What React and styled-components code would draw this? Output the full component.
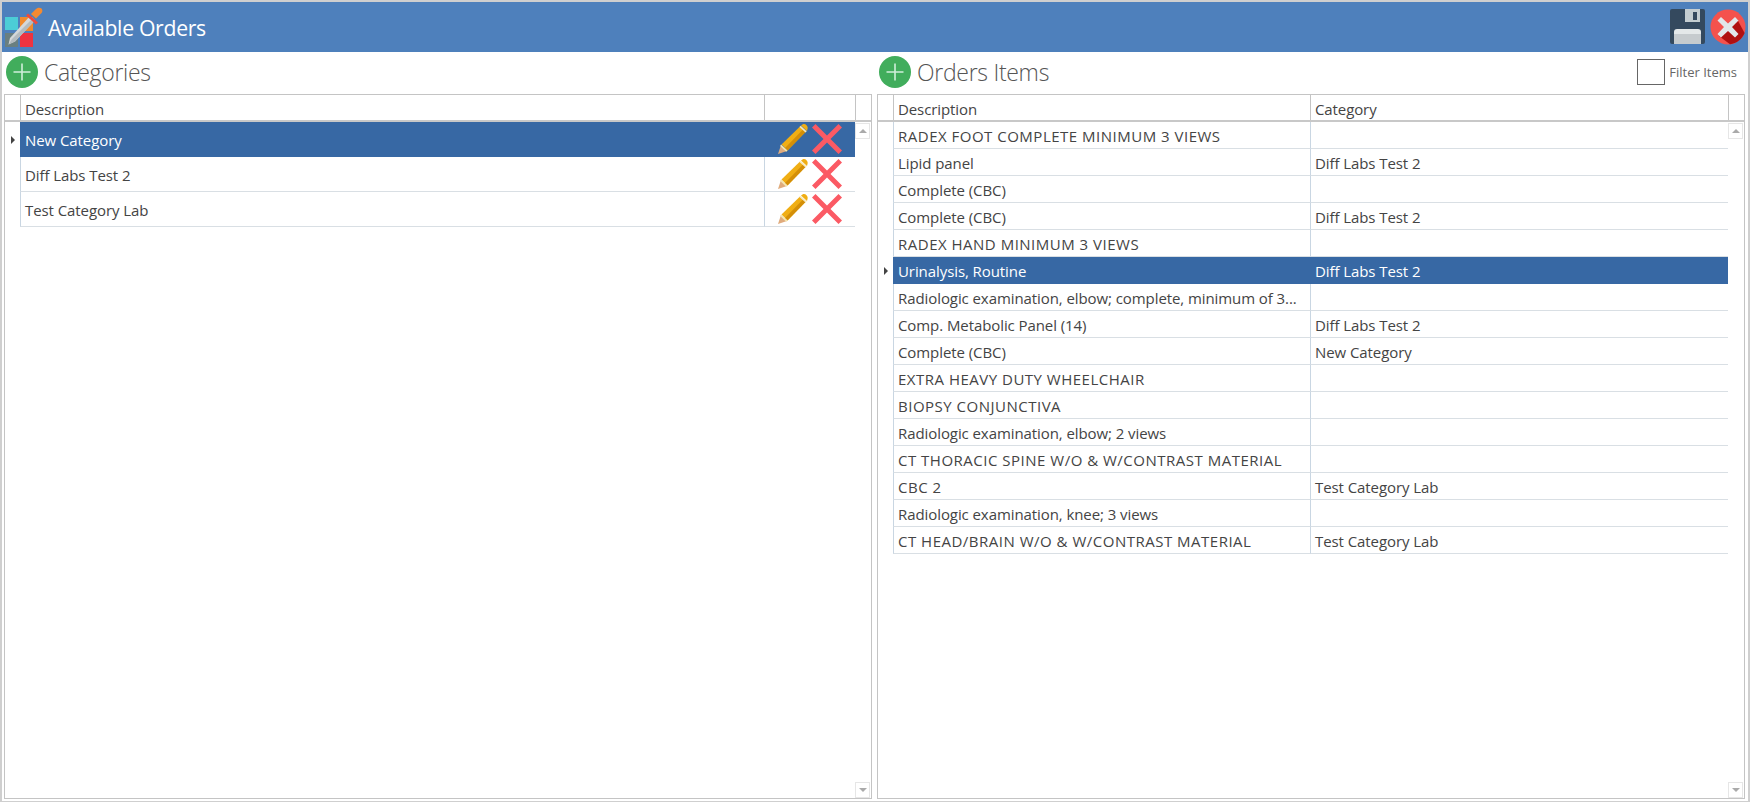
import React from "react";
import styled, { createGlobalStyle } from "styled-components";

const Global = createGlobalStyle`
  html, body { margin: 0; padding: 0; background: #fff; }
  #root { height: 802px; }
  * { box-sizing: border-box; }
`;

const Window = styled.div`
  width: 1750px; height: 802px; display: flex; flex-direction: column;
  background: #fff; border: 2px solid #cfcfcf; border-bottom-width: 1px;
  font-family: "Open Sans", "Noto Sans", sans-serif; color: #444;
`;
const TitleBar = styled.header`
  height: 50px; flex: none; background: #4e80bc; display: flex; align-items: center;
  padding: 0 2px; gap: 4px; color: #fff;
`;
const AppIcon = styled.svg`width: 42px; height: 44px; flex: none;`;
const Title = styled.h1`
  margin: 0 0 0 -2px; font-size: 21.2px; font-weight: 400; letter-spacing: -0.3px; flex: 1;
`;
const TitleAction = styled.svg`width: 36px; height: 36px; flex: none;`;
const Panels = styled.main`
  flex: 1; min-height: 0; display: grid; grid-template-columns: 868px 868px; column-gap: 5px;
  padding: 0 0 2px 2px;
`;
const Panel = styled.section`display: flex; flex-direction: column; min-height: 0;`;
const PanelHead = styled.div`
  height: 42px; flex: none; display: flex; align-items: center; padding: 0 0 2px 2px;
`;
const AddIcon = styled.svg`width: 32px; height: 32px; flex: none;`;
const PanelTitle = styled.h2`
  margin: 0 0 0 6px; font-size: 23px; font-weight: 300; color: #555; flex: 1; letter-spacing: -0.3px;
`;
const Check = styled.span`
  width: 28px; height: 26px; border: 1px solid #666; background: #fff; flex: none;
`;
const CheckLabel = styled.span`
  font-size: 13px; color: #666; margin: 0 8px 0 4px;
`;
const GridBox = styled.div`
  position: relative; flex: 1; border: 1px solid #c4c4c4; min-height: 0;
  font-size: 15px;
`;
const HeadRow = styled.div`
  height: 27px; display: grid; grid-template-columns: ${(p) => p.$cols};
  border-bottom: 2px solid #c8c8c8;
`;
const HeadCell = styled.div`
  border-left: ${(p) => (p.$first ? "none" : "1px solid #c4c4c4")};
  padding: 4px 0 0 4px; line-height: 20px; white-space: nowrap; letter-spacing: -0.1px;
`;
const Row = styled.div`
  height: ${(p) => p.$h}px; display: grid; grid-template-columns: ${(p) => p.$cols};
`;
const Indicator = styled.div`display: flex; align-items: center; padding-left: 6px;`;
const Caret = styled.span`
  width: 0; height: 0; border-left: 4px solid #444; border-top: 4px solid transparent; border-bottom: 4px solid transparent;
`;
const Cell = styled.div`
  display: flex; align-items: center; padding: 1px 0 0 4px; white-space: nowrap; overflow: hidden;
  letter-spacing: ${(p) => (p.$caps ? "0.5px" : "-0.08px")}; min-width: 0;
  border-bottom: 1px solid ${(p) => (p.$sel ? "#3768a4" : "#d9dfe4")};
  border-left: 1px solid ${(p) => (p.$sel ? "#3768a4" : "#c9d6e2")};
  background: ${(p) => (p.$sel ? "#3768a4" : "transparent")};
  color: ${(p) => (p.$sel ? "#fff" : "#444")};
`;
const ActionCell = styled(Cell)`padding: 0 0 0 13px; gap: 4px;`;
const Icon = styled.svg`width: 30px; height: 30px; flex: none;`;
const ScrollBtn = styled.div`
  position: absolute; right: 1px; ${(p) => (p.$down ? "bottom: 0;" : "top: 28px;")}
  width: 15px; height: 16px; border: 1px solid #e6e6e6; display: flex; align-items: center; justify-content: center;
  &::after {
    content: ""; width: 0; height: 0; border-left: 4px solid transparent; border-right: 4px solid transparent;
    ${(p) => (p.$down ? "border-top: 4px solid #aaa;" : "border-bottom: 4px solid #aaa;")}
  }
`;

const Plus = () => (
  <AddIcon viewBox="0 0 32 32">
    <circle cx="16" cy="16" r="16" fill="#41ad5c" />
    <path d="M16 7.5v17M7.5 16h17" stroke="#cfeeda" strokeWidth="1.6" />
  </AddIcon>
);
const Pencil = () => (
  <Icon viewBox="0 0 30 30">
    <path d="M0 30l3-9 6 6z" fill="#e0ab7c" />
    <path d="M3.500 20.500L22 2.500l5.500 5.500L9.500 26.500z" fill="#f0ae14" />
    <path d="M7 24L25 5.500l2.500 2.500L9.500 26.500z" fill="#d48f08" />
    <path d="M3 20.500l6.500 6-1.300 1.200-6-5.700z" fill="#f4e6b0" />
    <path d="M23 1.500l6 5.500 .5-2c.5-1.500 0-2.800-1-3.800-1-1-2.500-1.500-4-.8z" fill="#f0ae14" />
    <path d="M21.500 3l6 5.500 1.200-1.200-6-5.500z" fill="#f6e9c0" />
  </Icon>
);
const Cross = () => (
  <Icon viewBox="0 0 30 30">
    <path d="M3.500 0L15 11.500 26.500 0 30 3.500 18.500 15 30 26.500 26.500 30 15 18.500 3.500 30 0 26.500 11.500 15 0 3.500z" fill="#fb5a64" />
  </Icon>
);

const isCaps = (t) => t === t.toUpperCase() && /[A-Z]{3}/.test(t);

const catCols = "15px 744px 91px 16px";
const catRows = ["New Category", "Diff Labs Test 2", "Test Category Lab"];
const itemCols = "15px 417px 418px 16px";
const items = [
  ["RADEX FOOT COMPLETE MINIMUM 3 VIEWS", ""],
  ["Lipid panel", "Diff Labs Test 2"],
  ["Complete (CBC)", ""],
  ["Complete (CBC)", "Diff Labs Test 2"],
  ["RADEX HAND MINIMUM 3 VIEWS", ""],
  ["Urinalysis, Routine", "Diff Labs Test 2"],
  ["Radiologic examination, elbow; complete, minimum of 3...", ""],
  ["Comp. Metabolic Panel (14)", "Diff Labs Test 2"],
  ["Complete (CBC)", "New Category"],
  ["EXTRA HEAVY DUTY WHEELCHAIR", ""],
  ["BIOPSY CONJUNCTIVA", ""],
  ["Radiologic examination, elbow; 2 views", ""],
  ["CT THORACIC SPINE W/O & W/CONTRAST MATERIAL", ""],
  ["CBC 2", "Test Category Lab"],
  ["Radiologic examination, knee; 3 views", ""],
  ["CT HEAD/BRAIN W/O & W/CONTRAST MATERIAL", "Test Category Lab"],
];

export default function App() {
  return (
    <Window>
      <Global />
      <TitleBar>
        <AppIcon viewBox="0 0 42 44">
          <rect x="1" y="12" width="13" height="13" fill="#4ccdd6" />
          <rect x="16" y="12" width="13" height="14" fill="#f18a2d" />
          <rect x="1" y="28" width="13" height="14" fill="#6a7f80" />
          <rect x="16" y="28" width="13" height="14" fill="#ee3340" />
          <path d="M6 33L26 11l5 4.500-20 21-6.500 3z" fill="#d5d8da" />
          <path d="M8 34L29 13l2 2.500-20 21-6.500 3z" fill="#b4bbbf" />
          <path d="M24 8.500l10 9-2 2-10-9z" fill="#ee4a3c" />
          <path d="M27 9l5-5c2-2 4.500-1.500 5.500-.5s1.500 3.500-.5 5l-5 5z" fill="#f58a30" />
        </AppIcon>
        <Title>Available Orders</Title>
        <TitleAction viewBox="0 0 36 36">
          <rect x="0" y="0" width="35" height="35" rx="2" fill="#34495e" />
          <path d="M15 0h15v13H15z" fill="#c4cdd1" />
          <rect x="23" y="3" width="4" height="8" fill="#34495e" />
          <path d="M4 23q0-3 3-3h21q3 0 3 3v12H4z" fill="#e4e8e9" />
          <rect x="4" y="25" width="27" height="10" fill="#c6cbce" />
        </TitleAction>
        <TitleAction viewBox="0 0 36 36">
          <circle cx="18" cy="18" r="17.500" fill="#f4524d" />
          <path d="M9 27l11 8.300c6.500-.8 12.500-5.500 14.600-11.300L27 10z" fill="#b01010" />
          <path d="M11 8l7 6.500L25 8l3.500 3.500-6.500 6.500 6.500 7-3.500 3.500-7-6.500-7 6.500-3.500-3.500 6.500-7-6.500-6.500z" fill="#e2e7ea" />
        </TitleAction>
      </TitleBar>
      <Panels>
        <Panel>
          <PanelHead>
            <Plus />
            <PanelTitle>Categories</PanelTitle>
          </PanelHead>
          <GridBox>
            <HeadRow $cols={catCols}>
              <HeadCell $first />
              <HeadCell>Description</HeadCell>
              <HeadCell />
              <HeadCell />
            </HeadRow>
            {catRows.map((r, i) => (
              <Row key={r} $h={35} $cols={catCols}>
                <Indicator>{i === 0 && <Caret />}</Indicator>
                <Cell $sel={i === 0}>{r}</Cell>
                <ActionCell $sel={i === 0}>
                  <Pencil />
                  <Cross />
                </ActionCell>
              </Row>
            ))}
            <ScrollBtn />
            <ScrollBtn $down />
          </GridBox>
        </Panel>
        <Panel>
          <PanelHead>
            <Plus />
            <PanelTitle>Orders Items</PanelTitle>
            <Check />
            <CheckLabel>Filter Items</CheckLabel>
          </PanelHead>
          <GridBox>
            <HeadRow $cols={itemCols}>
              <HeadCell $first />
              <HeadCell>Description</HeadCell>
              <HeadCell>Category</HeadCell>
              <HeadCell />
            </HeadRow>
            {items.map(([d, c], i) => (
              <Row key={i} $h={27} $cols={itemCols}>
                <Indicator>{i === 5 && <Caret />}</Indicator>
                <Cell $sel={i === 5} $caps={isCaps(d)}>{d}</Cell>
                <Cell $sel={i === 5}>{c}</Cell>
              </Row>
            ))}
            <ScrollBtn />
            <ScrollBtn $down />
          </GridBox>
        </Panel>
      </Panels>
    </Window>
  );
}
